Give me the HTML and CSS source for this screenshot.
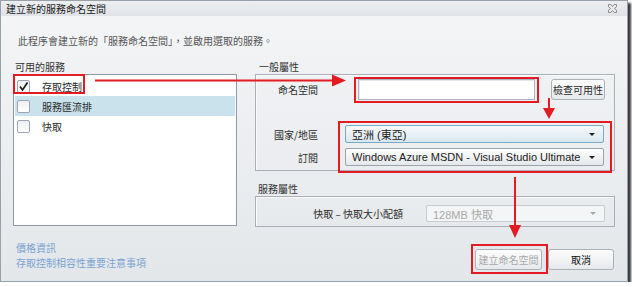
FILE: index.html
```html
<!DOCTYPE html>
<html>
    <head>
        <title>建立新的服務命名空間</title>
        <link rel="stylesheet" href="styles.css">
    </head>
    <body>
        <div class="window">
            <div class="titlebar">
                <span class="title">建立新的服務命名空間</span>
                <svg class="close" width="9" height="9" viewBox="0 0 9 9">
                    <polygon points="0.5,0.5 2.8,0.5 4.5,2.6 6.2,0.5 8.5,0.5 8.5,2.8 6.4,4.5 8.5,6.2 8.5,8.5 6.2,8.5 4.5,6.4 2.8,8.5 0.5,8.5 0.5,6.2 2.6,4.5 0.5,2.8" fill="#ececec" stroke="#8c8c8c" stroke-width="1"/>
                </svg>
            </div>
            <div class="content">
                <p class="intro">此程序會建立新的「服務命名空間」，並啟用選取的服務。</p>
                <div class="main">
                    <div class="services">
                        <div class="section-label">可用的服務</div>
                        <div class="listbox">
                            <div class="item">
                                <span class="check">
                                    <svg width="11" height="11" viewBox="0 0 11 11"><path d="M2 5.5 L4.5 9 L9.5 1.5" fill="none" stroke="#1c1c1c" stroke-width="1.7"/></svg>
                                </span>
                                存取控制
                            </div>
                            <div class="item selected"><span class="check"></span>服務匯流排</div>
                            <div class="item"><span class="check"></span>快取</div>
                        </div>
                    </div>
                    <div class="props">
                        <div class="group-label">一般屬性</div>
                        <div class="group general">
                            <div class="row">
                                <span class="row-label">命名空間</span>
                                <span class="textbox"></span>
                                <span class="btn check-btn">檢查可用性</span>
                            </div>
                            <div class="row region">
                                <span class="row-label">國家/地區</span>
                                <span class="select focused wide"><span>亞洲 (東亞)</span><i class="caret"></i></span>
                            </div>
                            <div class="row sub">
                                <span class="row-label">訂閱</span>
                                <span class="select wide"><span>Windows Azure MSDN - Visual Studio Ultimate</span><i class="caret"></i></span>
                            </div>
                        </div>
                        <div class="group-label second">服務屬性</div>
                        <div class="group service">
                            <div class="row">
                                <span class="row-label long">快取 – 快取大小配額</span>
                                <span class="select disabled"><span>128MB 快取</span><i class="caret"></i></span>
                            </div>
                        </div>
                    </div>
                </div>
                <div class="footer">
                    <div class="links">
                        <a href="#">價格資訊</a>
                        <a href="#">存取控制相容性重要注意事項</a>
                    </div>
                    <div class="buttons">
                        <span class="btn disabled-btn">建立命名空間</span>
                        <span class="btn cancel">取消</span>
                    </div>
                </div>
            </div>
            <svg class="marks" width="628" height="282" viewBox="0 0 628 282">
                <g fill="none" stroke="#e31b23" stroke-width="2">
                    <rect x="14" y="75" width="70" height="18"/>
                    <rect x="355" y="78" width="183" height="24"/>
                    <rect x="339" y="122" width="272" height="50"/>
                    <rect x="472" y="245" width="75" height="28"/>
                    <line x1="95" y1="80.5" x2="334" y2="80.5"/>
                    <line x1="549" y1="98" x2="549" y2="109"/>
                    <line x1="515" y1="177" x2="515" y2="226"/>
                </g>
                <g fill="#e31b23">
                    <polygon points="332,74.5 346,80.5 332,86.5"/>
                    <polygon points="543,108 555,108 549,119"/>
                    <polygon points="509,225 521,225 515,238"/>
                </g>
            </svg>
        </div>
    </body>
</html>
```
FILE: styles.css
```css
*{
margin: 0;
padding: 0;
box-sizing: border-box;
}
body{
background: #fff;
font-family: "Noto Sans CJK TC", sans-serif;
font-size: 10px;
color: #333;
}
.window{
position: relative;
width: 628px;
height: 282px;
border: 1px solid #98a1aa;
background: linear-gradient(#f4f5f7, #e4e7ea);
box-shadow: 3px 3px 2px #3a3a3a;
display: flex;
flex-direction: column;
}
.titlebar{
height: 15px;
display: flex;
align-items: center;
justify-content: space-between;
padding: 0 10px 0 5px;
background: linear-gradient(#eceef1, #dfe3e7);
}
.title{
line-height: 15px;
color: #1a1a1a;
}
.content{
padding: 0 12px;
}
.intro{
margin: 18px 0 0 5px;
line-height: 14px;
color: #555;
}
.main{
display: grid;
grid-template-columns: 224px 1fr;
column-gap: 18px;
margin-top: 12px;
}
.section-label{
line-height: 14px;
padding-left: 2px;
}
.listbox{
height: 152px;
border: 1px solid #8d9aa6;
background: #fff;
padding: 1px;
}
.item{
height: 20px;
display: flex;
align-items: center;
padding-left: 2px;
color: #2a2a2a;
}
.item.selected{
background: #c9e2ec;
}
.check{
width: 13px;
height: 13px;
margin-right: 12px;
border: 1px solid #9ba6b1;
border-radius: 2px;
background: linear-gradient(#eef0f3, #fff);
display: flex;
align-items: center;
justify-content: center;
}
.group-label{
line-height: 14px;
padding-left: 4px;
}
.group-label.second{
margin-top: 11px;
padding-left: 3px;
}
.group{
border: 1px solid #a8b0b8;
box-shadow: inset 1px 1px 0 #fbfbfc;
}
.general{
height: 97px;
padding: 4px 0;
}
.service{
height: 31px;
padding-top: 8px;
}
.row{
display: flex;
align-items: center;
}
.row-label{
width: 62px;
text-align: right;
color: #2a2a2a;
}
.row-label.long{
width: 147px;
}
.textbox{
margin-left: 40px;
width: 177px;
height: 21px;
border: 1px solid #aab3bc;
background: #fff;
box-shadow: inset 1px 1px 0 #e4e8ec;
}
.btn{
display: flex;
align-items: center;
justify-content: center;
height: 21px;
border: 1px solid #aab2ba;
border-radius: 3px;
background: linear-gradient(#fdfdfd, #e6e9ec);
color: #2a2a2a;
}
.check-btn{
margin-left: 16px;
width: 54px;
}
.region{
margin-top: 25px;
}
.sub{
margin-top: 5px;
}
.select{
display: flex;
align-items: center;
justify-content: space-between;
height: 18px;
width: 179px;
margin-left: 23px;
padding: 0 8px 0 6px;
border: 1px solid #99a3ad;
border-radius: 2px;
background: linear-gradient(#fefefe, #e5e8ea);
font-family: "Liberation Sans", "Noto Sans CJK TC", sans-serif;
font-size: 11px;
color: #222;
}
.select.wide{
width: 259px;
margin-left: 27px;
}
.select.focused{
border-color: #79a9c8;
background: linear-gradient(#f7fafc, #d9e7ef);
}
.select.disabled{
height: 17px;
border-color: #c6ccd2;
background: #f4f5f6;
color: #a8a8a8;
}
.caret{
width: 0;
height: 0;
border-left: 3px solid transparent;
border-right: 3px solid transparent;
border-top: 3px solid #222;
}
.disabled .caret{
border-top-color: #a8a8a8;
}
.footer{
display: flex;
justify-content: space-between;
margin-top: 13px;
}
.links{
display: flex;
flex-direction: column;
padding-left: 3px;
line-height: 15px;
}
.links a{
color: #7aa3d3;
text-decoration: none;
}
.buttons{
display: flex;
gap: 6px;
margin: 9px 1px 0 0;
}
.disabled-btn{
width: 67px;
color: #a9a9a9;
}
.cancel{
width: 66px;
color: #111;
}
.marks{
position: absolute;
left: -1px;
top: -1px;
pointer-events: none;
}
```
